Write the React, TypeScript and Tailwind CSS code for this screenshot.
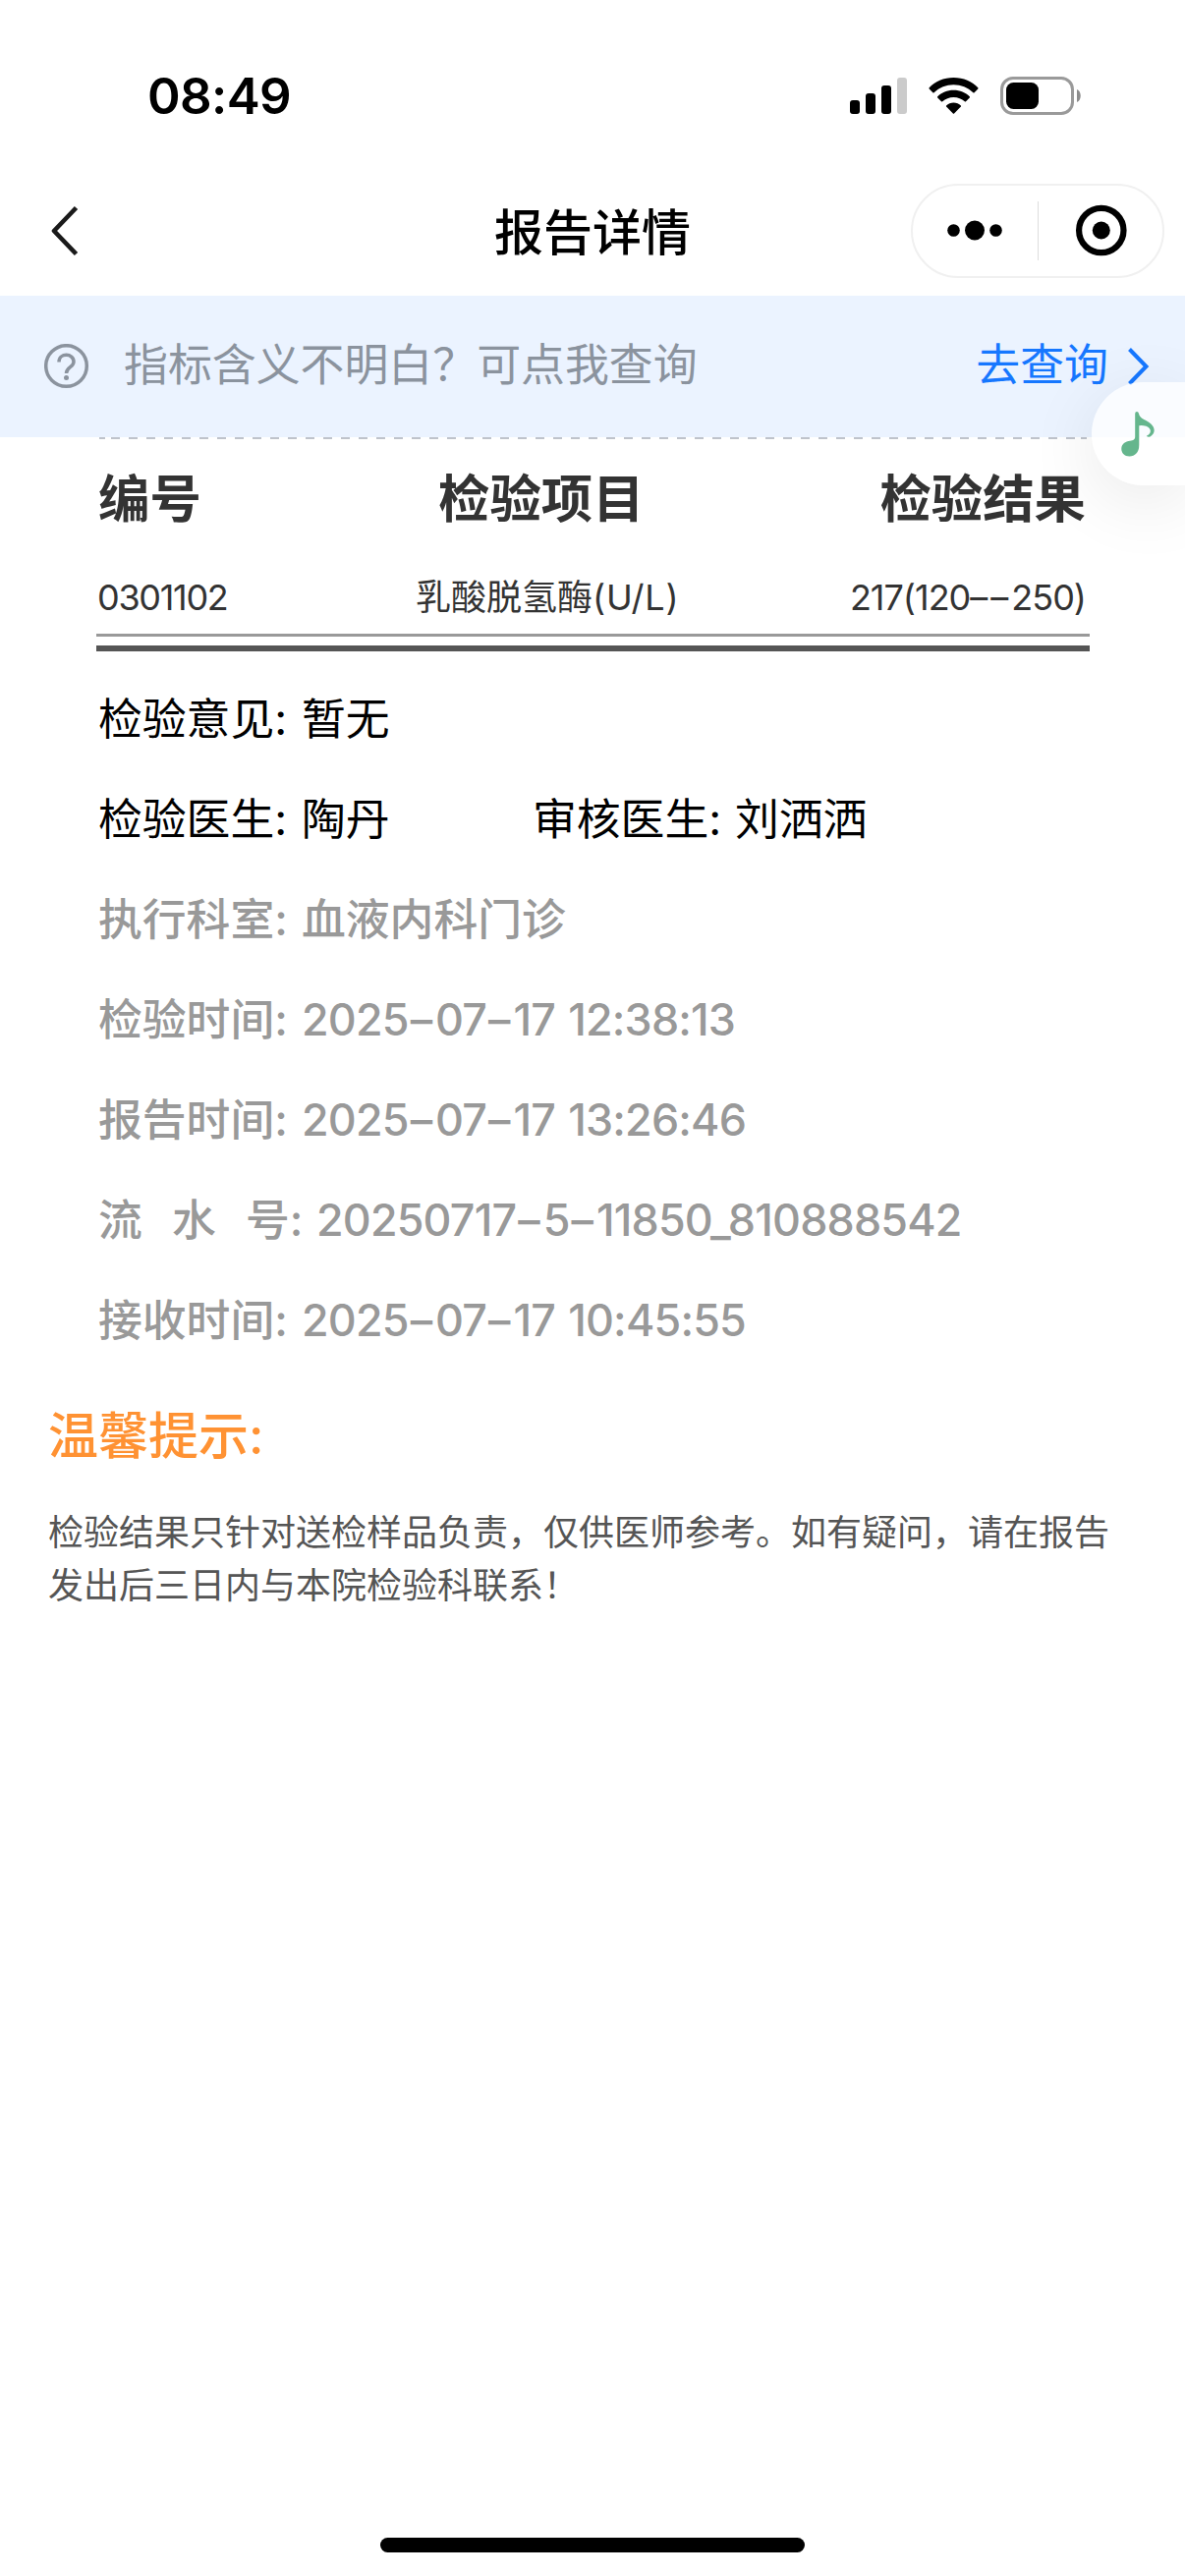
import React from 'react';

const dimRows = [
  { label: '执行科室:', value: '血液内科门诊' },
  { label: '检验时间:', value: '2025–07–17 12:38:13' },
  { label: '报告时间:', value: '2025–07–17 13:26:46' },
  { label: '流水号:', value: '20250717–5–11850_810888542', spread: true },
  { label: '接收时间:', value: '2025–07–17 10:45:55' },
];

// Numeric text with tightened digits and a little air around each dash.
function Figures({ text }: { text: string }) {
  return (
    <span className="tracking-[-0.800px] whitespace-pre [word-spacing:2px]">
      {text.split(/(–)/).map((part, i) =>
        part === '–' ? (
          <span key={i} className="mr-[3px] ml-[2px] tracking-normal">
            –
          </span>
        ) : (
          part
        ),
      )}
    </span>
  );
}

function StatusBar() {
  return (
    <div className="flex h-[186px] items-start justify-between pl-[150px] pr-[105px] pt-[78px] text-black">
      <div className="h-[39px] text-[51px] leading-[39px] font-semibold tracking-[-0.6px]">08:49</div>
      <div className="flex h-[39px] items-start">
        <svg width="58" height="39" viewBox="0 0 58 39" className="mr-[22px]">
          <rect x="0" y="24" width="10" height="14" rx="3" />
          <rect x="16" y="17" width="10" height="21" rx="3" />
          <rect x="32" y="9" width="10" height="29" rx="3" />
          <rect x="48" y="1" width="10" height="37" rx="3" fill="#cbcbcb" />
        </svg>
        <svg width="51" height="39" viewBox="0 0 51 39" className="mr-[22px]">
          <path d="M25.5 1C35.500 1 44.500 5 50.300 11.200Q50.800 11.800 50.300 12.400L46.600 16.200Q46 16.700 45.400 16.200C40 11.200 33 8.300 25.500 8.300S11 11.200 5.600 16.200Q5 16.700 4.400 16.200L.7 12.400Q.2 11.800 .7 11.200C6.500 5 15.500 1 25.500 1Z" />
          <path d="M25.500 13.800C32 13.800 37.700 16.300 41.800 20.300Q42.300 20.900 41.800 21.500L38 25.300Q37.400 25.800 36.800 25.300C33.800 22.600 29.900 21 25.500 21S17.200 22.600 14.200 25.300Q13.600 25.800 13 25.300L9.200 21.500Q8.700 20.900 9.200 20.300C13.300 16.300 19 13.800 25.500 13.800Z" />
          <path d="M25.500 26.500C28.400 26.500 31 27.600 32.900 29.400Q33.400 30 32.900 30.600L26.100 37.500Q25.500 38 24.900 37.500L18.100 30.600Q17.600 30 18.100 29.400C20 27.600 22.600 26.500 25.500 26.500Z" />
        </svg>
        <svg width="83" height="39" viewBox="0 0 83 39">
          <rect x="1.500" y="1.500" width="72" height="36" rx="11.500" fill="none" stroke="#9a9a9a" strokeWidth="3" />
          <rect x="6" y="6" width="33" height="27" rx="7.500" />
          <path d="M78 13C83 15 83 24 78 26Z" fill="#8c8c8c" />
        </svg>
      </div>
    </div>
  );
}

function NavBar() {
  return (
    <div className="grid h-[115px] grid-cols-[1fr_auto_1fr] items-start">
      <svg width="32" height="54" viewBox="0 0 32 54" className="ml-[50px] mt-[22px]" fill="none" stroke="#1a1a1a" strokeWidth="4.600">
        <path d="M27.500 3.500L5 27L27.500 50.500" strokeLinejoin="round" />
      </svg>
      <h1 className="text-[50px] leading-[102px] font-medium text-black">报告详情</h1>
      <div className="mt-px mr-[21px] flex h-[96px] w-[258px] items-center justify-self-end rounded-full border-2 border-[#f0f0f0]">
        <svg width="127" height="60" viewBox="0 0 127 60">
          <circle cx="41.500" cy="29.500" r="6.300" />
          <circle cx="63" cy="29.500" r="10" />
          <circle cx="84.500" cy="29.500" r="6.300" />
        </svg>
        <div className="h-[60px] w-px bg-[#dedede]" />
        <svg width="126" height="60" viewBox="0 0 126 60">
          <circle cx="63.800" cy="29.500" r="22.700" fill="none" stroke="#000" strokeWidth="6.200" />
          <circle cx="63.800" cy="29.500" r="9" />
        </svg>
      </div>
    </div>
  );
}

function MusicButton() {
  return (
    <div className="absolute top-[88px] right-0 h-[105px] w-[95px] rounded-l-full bg-white/75 pt-[30px] pl-[30px] shadow-[0_16px_72px_rgba(0,0,0,0.09)]">
      <svg width="35" height="46" viewBox="0 0 35 46" fill="#65b68d">
        <path d="M14.200 2Q14.200 0 16 0Q17.600 0 18 2C19 6.500 22.500 7.500 27 10C34 14 36.500 21 29.500 25.500Q27 26 25.800 24.800C31 22.500 31.500 17 25.500 14.800Q21.500 13.600 18.300 14.200V34C18.300 41.500 14 45.500 8.500 45.500C3.500 45.500 .3 42 .3 38C.3 32.500 4.500 30.500 9 29.800C12.500 29.300 14.200 28.500 14.200 25.500Z" />
      </svg>
    </div>
  );
}

function HelpBanner() {
  return (
    <div className="relative flex h-[144px] items-center bg-[#ebf3ff] pr-[35px] pl-[45px] text-[44.900px]">
      <svg width="46" height="46" viewBox="0 0 46 46" fill="none" stroke="#8b939e" strokeWidth="3.500">
        <circle cx="22.500" cy="22.500" r="20.800" />
        <path d="M15 18.500C15 9 30 9 30 18.300C30 24 22.500 23.500 22.500 30" />
        <circle cx="22.500" cy="34.500" r="2.500" fill="#8b939e" stroke="none" />
      </svg>
      <span className="ml-[35px] text-[#8b939e]">指标含义不明白？可点我查询</span>
      <span className="ml-auto text-[#1677ff]">去查询</span>
      <svg width="24" height="40" viewBox="0 0 24 40" className="ml-[19px]" fill="none" stroke="#1677ff" strokeWidth="4">
        <path d="M2.500 2.500L19.500 20L2.500 37.500" />
      </svg>
      <MusicButton />
    </div>
  );
}

function DashedRule() {
  return (
    <div className="mx-[3px] flex h-[2px] gap-[6px]">
      <div className="w-[6px] bg-[#bfc3cb]" />
      <div className="flex-1 bg-[repeating-linear-gradient(90deg,#bfc3cb_0_9px,transparent_9px_18px)]" />
      <div className="w-[6px] bg-[#bfc3cb]" />
    </div>
  );
}

function ReportTable() {
  return (
    <div className="ml-[98px] w-[1011px] border-b-[6px] border-[#555] pb-[9px]">
      <div className="border-b-[3px] border-[#999]">
        <DashedRule />
        <div className="flex h-[122px] items-center justify-between pr-[4px] pl-[2px] text-[52.400px] font-bold text-[#333]">
          <span className="w-[346px]">编号</span>
          <span>检验项目</span>
          <span className="flex-1 text-right">检验结果</span>
        </div>
        <div className="flex h-[76px] items-center pt-[2px] pr-[4px] pl-px text-[36px] text-[#333]">
          <span className="w-[324px] tracking-[-1.300px]">0301102</span>
          <span>乳酸脱氢酶</span>
          <span className="tracking-[0.800px]">(U/L)</span>
          <span className="flex-1 text-right tracking-[-1px]">
            217(120<span className="tracking-[3px]">––</span>250)
          </span>
        </div>
      </div>
    </div>
  );
}

function Details() {
  return (
    <div className="mt-[18px] pl-[100px] text-[44.800px] leading-[102px] text-black">
      <div className="flex">
        <span className="w-[207px]">检验意见:</span>
        <span>暂无</span>
      </div>
      <div className="flex">
        <span className="w-[207px]">检验医生:</span>
        <span className="w-[235px]">陶丹</span>
        <span className="w-[206px]">审核医生:</span>
        <span>刘洒洒</span>
      </div>
      {dimRows.map((row) => (
        <div key={row.label} className="flex font-medium text-[#999]">
          {row.spread ? (
            <span className="flex w-[222px]">
              <span className="w-[75px]">流</span>
              <span className="w-[75px]">水</span>
              <span>号:</span>
            </span>
          ) : (
            <span className="w-[207px]">{row.label}</span>
          )}
          {/\d/.test(row.value) ? <Figures text={row.value} /> : <span>{row.value}</span>}
        </div>
      ))}
    </div>
  );
}

export default function App() {
  return (
    <div className="flex h-[2622px] w-[1206px] flex-col overflow-hidden bg-white font-['Inter','Noto_Sans_CJK_SC',sans-serif]">
      <StatusBar />
      <NavBar />
      <HelpBanner />
      <ReportTable />
      <Details />
      <div className="pl-[49px]">
        <h2 className="mt-[19px] text-[51px] leading-[96px] font-medium text-[#ff9233]">温馨提示:</h2>
        <p className="mt-[23px] w-[1084px] text-[36px] leading-[54px] text-[#555]">
          检验结果只针对送检样品负责，仅供医师参考。如有疑问，请在报告发出后三日内与本院检验科联系！
        </p>
      </div>
      <div className="mx-auto mt-auto mb-[24px] h-[15px] w-[432px] rounded-full bg-black" />
    </div>
  );
}
